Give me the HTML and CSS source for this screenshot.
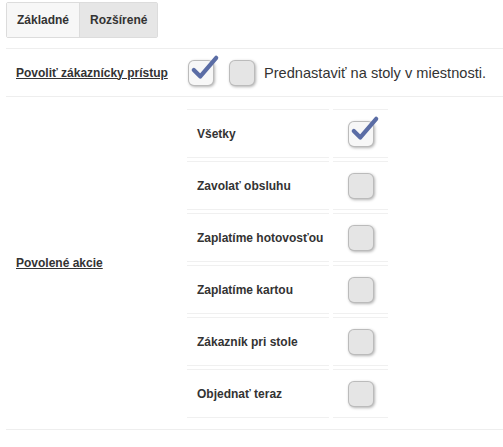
FILE: index.html
```html
<!DOCTYPE html>
<html>
<head>
<meta charset="utf-8">
<link rel="stylesheet" href="styles.css">
</head>
<body>
<div class="page">
  <div class="tabs">
    <div class="tab active">Základné</div>
    <div class="tab">Rozšírené</div>
  </div>
  <table class="form">
    <tr class="row-access">
      <td class="label"><a href="#">Povoliť zákaznícky prístup</a></td>
      <td class="value">
        <div class="inline">
          <span class="cb checked"><svg viewBox="0 0 30 30" class="tick"><path d="M3 16 L10 23 L27 3"/></svg></span>
          <span class="cb"></span>
          <span class="preset">Prednastaviť na stoly v miestnosti.</span>
        </div>
      </td>
    </tr>
    <tr class="row-actions">
      <td class="label"><a href="#">Povolené akcie</a></td>
      <td class="value">
        <table class="actions">
          <tr><td class="name">Všetky</td><td class="check"><span class="cb checked"><svg viewBox="0 0 30 30" class="tick"><path d="M3 16 L10 23 L27 3"/></svg></span></td></tr>
          <tr><td class="name">Zavolať obsluhu</td><td class="check"><span class="cb"></span></td></tr>
          <tr><td class="name">Zaplatíme hotovosťou</td><td class="check"><span class="cb"></span></td></tr>
          <tr><td class="name">Zaplatíme kartou</td><td class="check"><span class="cb"></span></td></tr>
          <tr><td class="name">Zákazník pri stole</td><td class="check"><span class="cb"></span></td></tr>
          <tr><td class="name">Objednať teraz</td><td class="check"><span class="cb"></span></td></tr>
        </table>
      </td>
    </tr>
  </table>
</div>
</body>
</html>
```
FILE: styles.css
```css
html, body { margin: 0; padding: 0; background: #fff; }
body { font-family: "Liberation Sans", Arial, sans-serif; color: #333; font-size: 12px; }
.page { padding: 2px 0 0 6px; }
.tabs { display: inline-flex; border: 1px solid #dcdcdc; border-radius: 2px; }
.tab { height: 34px; line-height: 34px; font-weight: bold; font-size: 12px; padding: 0 10px; background: #e6e6e6; color: #333; }
.tab.active { background: #f7f7f7; border-right: 1px solid #dcdcdc; }
.form { border-collapse: collapse; width: 497px; margin-top: 10px; }
.form > tbody > tr > td { border-top: 1px solid #eee; border-bottom: 1px solid #eee; padding: 0; vertical-align: middle; }
.label { width: 170px; padding-left: 10px !important; }
.label a { color: #333; font-weight: bold; font-size: 12px; }
.row-access > td { height: 47px; }
.inline { display: flex; align-items: center; padding-left: 3px; }
.cb { position: relative; display: inline-block; width: 24px; height: 24px; border-radius: 5px; background: #e5e5e5; box-shadow: 0 0 0 1px #bbb, 1px 1px 3px 1px rgba(0,0,0,0.3); box-sizing: border-box; }
.cb.checked { background: #f7f7f7; }
.row-access .cb { margin-right: 17px; }
.row-access .cb + .cb { margin-right: 10px; }
.tick { position: absolute; left: 2px; top: -6px; width: 28px; height: 28px; overflow: visible; }
.tick path { fill: none; stroke: #5b6da5; stroke-width: 4.5; stroke-linecap: round; stroke-linejoin: round; }
.preset { font-size: 14.6px; color: #333; }
.row-actions > td.value { padding: 9px 0 8px 0; }
.actions { border-collapse: separate; border-spacing: 4px 3px; margin-left: -3px; }
.actions td { border-top: 1px solid #f0f0f0; border-bottom: 1px solid #f0f0f0; height: 47px; padding: 0; }
.actions .name { width: 132px; padding-left: 10px; font-weight: bold; font-size: 12px; color: #333; }
.actions .check { width: 55px; text-align: center; }
.actions .check .cb { margin-left: 1px; vertical-align: middle; }
```
